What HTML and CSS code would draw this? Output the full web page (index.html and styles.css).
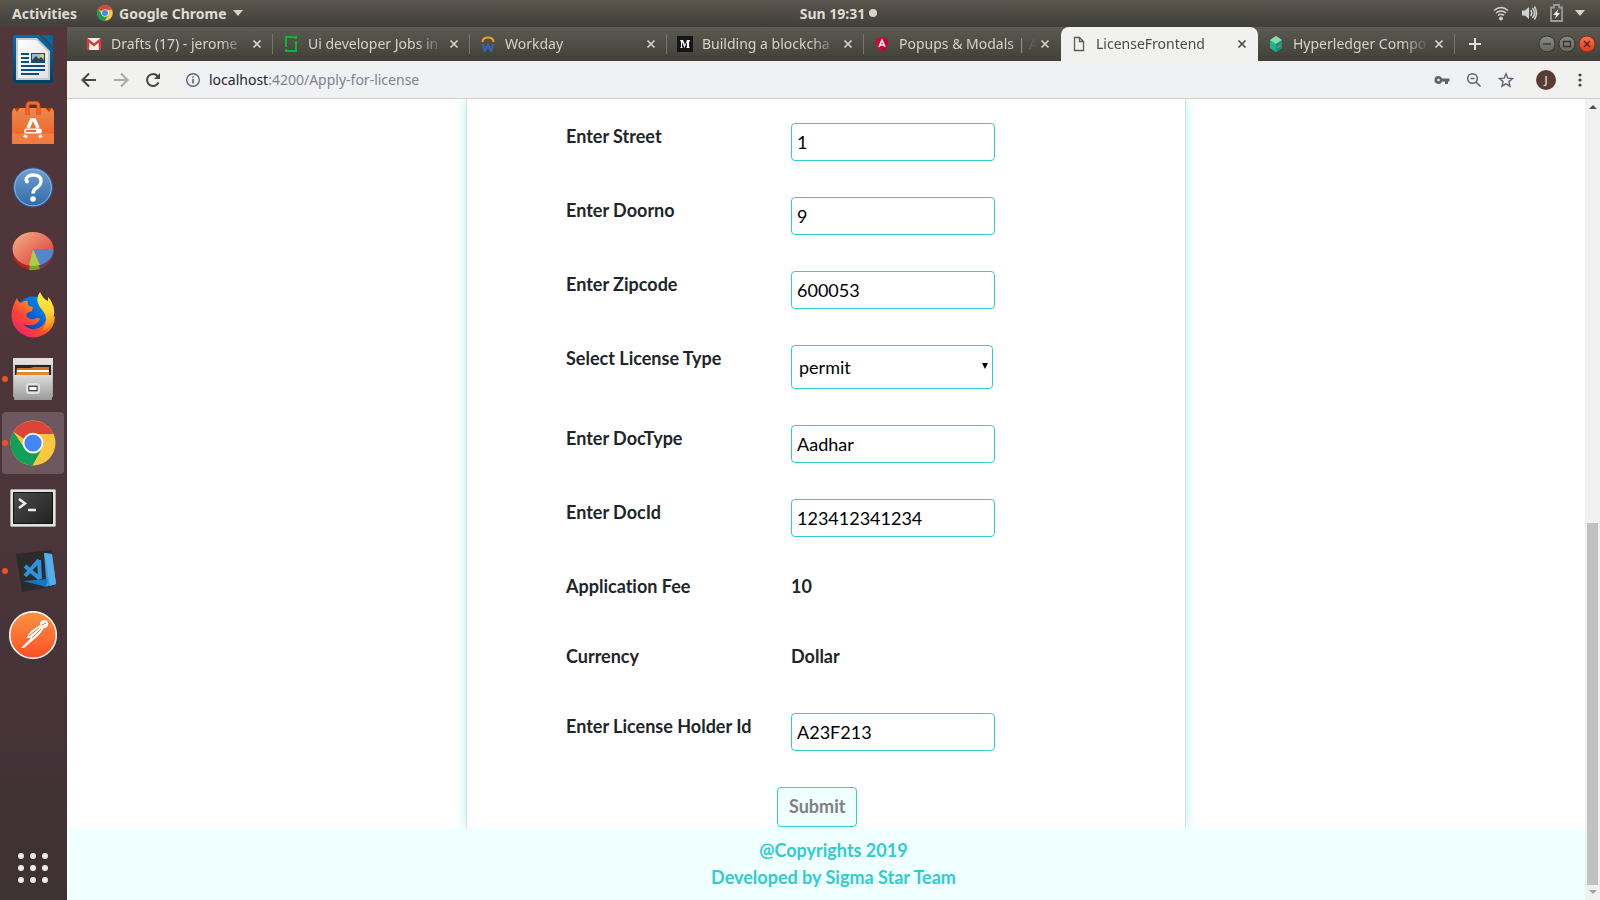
FILE: index.html
```html
<!DOCTYPE html>
<html lang="en">
<head>
<meta charset="utf-8">
<title>LicenseFrontend</title>
<link rel="stylesheet" href="styles.css">
</head>
<body>
<svg class="defs" aria-hidden="true">
  <defs>
    <symbol id="chrome" viewBox="0 0 46 46">
      <circle cx="23" cy="23" r="22.5" fill="#fcc73f"/>
      <path d="M3.5 11.8A22.5 22.5 0 0 1 43.5 14H23a10 10 0 0 0-9 5z" fill="#dc4437"/>
      <path d="M3.5 11.8A22.5 22.5 0 0 0 22.5 45.5L32.500 27.500A10 10 0 0 1 14.300 28z" fill="#10a05a"/>
      <circle cx="23" cy="23" r="10.300" fill="#fff"/>
      <circle cx="23" cy="23" r="8.600" fill="#4285f4"/>
    </symbol>
    <symbol id="close" viewBox="0 0 10 10">
      <path d="M1.500 1.500l7 7M8.500 1.500l-7 7" stroke="currentColor" stroke-width="1.700" fill="none"/>
    </symbol>
    <linearGradient id="blue" x2="0" y2="1"><stop stop-color="#6f9fd4"/><stop offset="1" stop-color="#2f6aa5"/></linearGradient>
    <linearGradient id="bag" x2="0" y2="1"><stop stop-color="#e98a4c"/><stop offset=".7" stop-color="#f0692b"/><stop offset=".72" stop-color="#f37f45"/><stop offset="1" stop-color="#f17a40"/></linearGradient>
    <linearGradient id="pie" x2="1" y2="1"><stop stop-color="#f6b18d"/><stop offset="1" stop-color="#d9342d"/></linearGradient>
    <linearGradient id="fox" x1="0" y1="1" x2="1" y2="0"><stop stop-color="#f0137c"/><stop offset=".4" stop-color="#ff4537"/><stop offset=".7" stop-color="#ff9a12"/><stop offset="1" stop-color="#ffe83c"/></linearGradient>
    <linearGradient id="foxtail" x2="0" y2="1"><stop stop-color="#fff24a"/><stop offset=".5" stop-color="#ffd52c"/><stop offset="1" stop-color="#ff7a10"/></linearGradient>
    <linearGradient id="globe" x1="1" x2="0" y2="1"><stop stop-color="#00a5f4"/><stop offset=".5" stop-color="#0662d6"/><stop offset="1" stop-color="#2b2173"/></linearGradient>
    <linearGradient id="steel" x2="0" y2="1"><stop stop-color="#dcdcdc"/><stop offset="1" stop-color="#9a9a9a"/></linearGradient>
    <linearGradient id="screen" x2="1" y2="1"><stop stop-color="#4b4b4b"/><stop offset="1" stop-color="#222"/></linearGradient>
    <linearGradient id="post" x2="0" y2="1"><stop stop-color="#ff9340"/><stop offset="1" stop-color="#ff4f25"/></linearGradient>
    <linearGradient id="paper" x2="1" y2="1"><stop stop-color="#fff"/><stop offset="1" stop-color="#e2e2e2"/></linearGradient>
    <linearGradient id="writer" x2="0" y2="1"><stop stop-color="#0070b0"/><stop offset="1" stop-color="#003f68"/></linearGradient>
    <linearGradient id="grey" x2="0" y2="1"><stop stop-color="#8b8b84"/><stop offset="1" stop-color="#666660"/></linearGradient>
    <linearGradient id="red" x2="0" y2="1"><stop stop-color="#f5744f"/><stop offset="1" stop-color="#df3f14"/></linearGradient>
  </defs>
</svg>
<div class="desktop">
  <header class="topbar">
    <div class="topbar-left">
      <button class="bar-button">Activities</button>
      <button class="bar-button app-menu"><svg width="16" height="16"><use href="#chrome"/></svg>Google Chrome<svg width="10" height="6"><path d="M0 0h10L5 6z" fill="#d6d4cf"/></svg></button>
    </div>
    <button class="bar-button clock">Sun 19:31<span class="dot"></span></button>
    <div class="status">
      <svg width="16" height="16" viewBox="0 0 16 16" fill="none" stroke="#d6d4cf" stroke-width="1.500"><path d="M1 5.500q7-6 14 0M3 8q5-4 10 0M5 10.500q3-2.300 6 0"/><circle cx="8" cy="13.500" r="1.500" fill="#d6d4cf" stroke-width="1"/></svg>
      <svg width="17" height="16" viewBox="0 0 17 16" fill="none" stroke="#d6d4cf" stroke-width="1.500"><path d="M1 5.500h3L8 2v12l-4-3.500H1z" fill="#d6d4cf" stroke="none"/><path d="M9.500 5q2.500 3 0 6M11.500 3q4 5 0 10M13.500 1.500q4 6.500 0 13"/></svg>
      <svg width="13" height="18" viewBox="0 0 13 18"><path d="M1 3.500h3V1h5v2.500h3V17H1z" fill="none" stroke="#9b9993" stroke-width="1.800"/><path d="M8.500 5L3 11h3l-1 4 5-6H7z" fill="#eee"/></svg>
      <svg width="10" height="6"><path d="M0 0h10L5 6z" fill="#d6d4cf"/></svg>
    </div>
  </header>
  <div class="workspace">
    <nav class="dock" aria-label="Applications">
      <button class="app" aria-label="Writer"><svg width="40" height="48" viewBox="0 0 40 48"><path d="M3 0h23l14 14v31q0 3-3 3H3q-3 0-3-3V3q0-3 3-3z" fill="url(#writer)"/><path d="M28 0h10q2 0 2 2v10z" fill="#0369a3"/><path d="M3 3h21l13 13v29H3z" fill="#c9ccce"/><path d="M5 5h18l12 12v26H5z" fill="url(#paper)"/><path d="M8 19h8M8 23h8M8 27h8M8 31h24M8 35h24M8 39h18" stroke="#0b4f80" stroke-width="2"/><path d="M18 18h14v10H18z" fill="#0b4f80"/><path d="M19 19h12v8H19z" fill="#87bfe4"/><circle cx="29" cy="21" r="2" fill="#e8cc50"/><path d="M19 27v-2l4-4 3 3 2-2 3 3v2z" fill="#33454a"/></svg></button>
      <button class="app" aria-label="Software"><svg width="42" height="44" viewBox="0 0 42 44"><path d="M1 7h40l1 5H0z" fill="#bb4011"/><path d="M0 11L2 7l3 4 3-4h25l4 4 3-4 2 4v32H0z" fill="url(#bag)"/><path d="M15.500 14V5q0-3 3-3h5q3 0 3 3v9" fill="none" stroke="#c9450f" stroke-width="4"/><path d="M15.500 14V5q0-3 3-3h5q3 0 3 3v9" fill="none" stroke="#ef6a37" stroke-width="2.400"/><path d="M16 27l3.500-8h3l3.500 8M14 34l-1 2.500M28 34l1 2.500" fill="none" stroke="#fff" stroke-width="3.600"/><rect x="12" y="27.500" width="18" height="5" rx="2.500" fill="#fff"/><path d="M14 30h10" stroke="#f0692b" stroke-width="2"/></svg></button>
      <button class="app" aria-label="Help"><svg width="42" height="42" viewBox="0 0 42 42"><circle cx="21" cy="21.500" r="19.500" fill="url(#blue)" stroke="#2a5e96"/><circle cx="21" cy="21.500" r="18.300" fill="none" stroke="#8db3dd"/><path d="M14 15q0-6 7-6 8 0 8 6 0 4-4 6.500-4 2.500-4 6" fill="none" stroke="#fff" stroke-width="3.300"/><circle cx="15" cy="15.500" r="2" fill="#fff"/><circle cx="21" cy="33" r="2.800" fill="#fff"/></svg></button>
      <button class="app" aria-label="Disk usage"><svg width="42" height="40" viewBox="0 0 42 40"><ellipse cx="21" cy="22" rx="20" ry="17" fill="#b52424"/><path d="M17 39l4-21 7 20q-5 1.500-11 1z" fill="#7ba42b"/><path d="M28 38l13-12v-7l-13 14z" fill="#245b95"/><ellipse cx="21" cy="18" rx="20.500" ry="17" fill="url(#pie)"/><path d="M21 18h20.500q0 11-13 16z" fill="#5288c9"/><path d="M21 18l7 16q-6 1.500-11 .5z" fill="#a6cf48"/></svg></button>
      <button class="app" aria-label="Firefox"><svg width="44" height="46" viewBox="0 0 44 46"><circle cx="22" cy="23" r="18.500" fill="url(#globe)"/><path d="M6 6q1 4 4 5 4-3 7-2-1 3 1 5l4 1-1 4q-5 1-6 4 2 5 8 4 4-2 6 0-2 5-8 6-5 1-9-1 5 6 12 5 8-1 11-9l9-4q0 12-10 18-12 7-23 0Q0 35 .5 23 1 14 6 6z" fill="url(#fox)"/><path d="M29 0q-4 5-2 11 1 4 5 8 5 6 2 15-2 4-5 6 10-3 13-13 3-9-1-16-1-3-4-6l0 4q-5-2-8-9z" fill="url(#foxtail)"/></svg></button>
      <button class="app running" aria-label="Files"><svg width="42" height="44" viewBox="0 0 42 44"><path d="M1 1h40v39H1z" fill="url(#steel)"/><path d="M2 1h38l1 6H1z" fill="#e0e0e0"/><path d="M3 8h36v10H3z" fill="#252525"/><path d="M5 11h14l2-1h16v8H4z" fill="#d9711f"/><path d="M5 13h32v2H5z" fill="#fff"/><path d="M5 15h32v3H5z" fill="#e38633"/><path d="M2 18h38v24q0 1-1 1H3q-1 0-1-1z" fill="url(#steel)"/><rect x="15" y="27" width="12" height="9" rx="2" fill="#aaa" stroke="#e0e0e0" stroke-width="2"/><rect x="17" y="29.500" width="8" height="4" fill="#fff" stroke="#444"/></svg></button>
      <button class="app running active" aria-label="Google Chrome"><svg width="46" height="46"><use href="#chrome"/></svg></button>
      <button class="app" aria-label="Terminal"><svg width="46" height="42" viewBox="0 0 46 42"><rect x=".5" y="3.500" width="45" height="37" rx="1" fill="#e2e2e2" stroke="#aaa"/><path d="M3.500 6.500h39v31h-39z" fill="url(#screen)" stroke="#111"/><path d="M9 13l6 4.500L9 22M18 24h8" fill="none" stroke="#eee" stroke-width="2.500"/></svg></button>
      <button class="app running code" aria-label="Visual Studio Code"><svg width="42" height="44" viewBox="0 0 42 44"><path d="M1 5l36-4 2 36L7 43z" fill="#2b2b2c"/><path d="M29 4l8 1 4 30-11 3 1-8z" fill="#289ce0"/><path d="M29 4l8 1 4 30-6 2z" fill="#55aee8"/><path d="M8 32l25-2-2 8z" fill="#1477c4"/><path d="M10 17l15 13M24 11L10 27M24 11l1 19" fill="none" stroke="#2d94dc" stroke-width="4"/></svg></button>
      <button class="app" aria-label="Postman"><svg width="48" height="48" viewBox="0 0 48 48"><circle cx="24" cy="24" r="23.300" fill="url(#post)" stroke="#fff" stroke-width="1.500"/><circle cx="35" cy="13" r="4" fill="#fff"/><path d="M31 14l-9 6-5 7h5l-10 10 3 0 15-13 5-7z" fill="#fff"/><path d="M20 25l10-8M23 27l9-9M33 14l4-2" stroke="#ff7035" stroke-width="1"/></svg></button>
      <button class="app launcher" aria-label="Show applications"><svg width="30" height="30" viewBox="0 0 30 30" fill="#eee"><circle cx="3" cy="3" r="3"/><circle cx="15" cy="3" r="3"/><circle cx="27" cy="3" r="3"/><circle cx="3" cy="15" r="3"/><circle cx="15" cy="15" r="3"/><circle cx="27" cy="15" r="3"/><circle cx="3" cy="27" r="3"/><circle cx="15" cy="27" r="3"/><circle cx="27" cy="27" r="3"/></svg></button>
    </nav>
    <section class="browser">
      <div class="tabs">
        <div class="tab"><svg class="favicon" viewBox="0 0 16 16"><path d="M1 2h14v12H1z" fill="#eee"/><path d="M2 14V4l6 5 6-5v10" fill="none" stroke="#d93a32" stroke-width="2.400"/></svg><a class="tab-title" href="#">Drafts (17) - jerome</a><button class="tab-close" aria-label="Close tab"><svg width="10" height="10"><use href="#close"/></svg></button></div>
        <div class="tab"><svg class="favicon" viewBox="0 0 16 16"><path d="M3 11V1h10v2M13 5v10H3v-2" fill="none" stroke="#0bb534" stroke-width="2"/></svg><a class="tab-title" href="#">Ui developer Jobs in</a><button class="tab-close" aria-label="Close tab"><svg width="10" height="10"><use href="#close"/></svg></button></div>
        <div class="tab"><svg class="favicon" viewBox="0 0 16 16"><path d="M2.500 6q0-4.500 5.500-4.500T13.500 6" fill="none" stroke="#eaa31f" stroke-width="2"/><path d="M2.500 8l2.500 7 3-6 3 6 2.500-7" fill="none" stroke="#3865b5" stroke-width="2"/></svg><a class="tab-title" href="#">Workday</a><button class="tab-close" aria-label="Close tab"><svg width="10" height="10"><use href="#close"/></svg></button></div>
        <div class="tab"><svg class="favicon" viewBox="0 0 16 16"><path d="M0 0h16v16H0z" fill="#151515"/><path d="M3 4h3l2 5 2-5h3v1l-1 1v5l1 1H9l1-1V6l-2.500 6L5 6v5l1 1H3l1-1V6z" fill="#fff"/></svg><a class="tab-title" href="#">Building a blockcha</a><button class="tab-close" aria-label="Close tab"><svg width="10" height="10"><use href="#close"/></svg></button></div>
        <div class="tab"><svg class="favicon" viewBox="0 0 16 16"><path d="M8 1l6 2-1 9-5 3-5-3-1-9z" fill="#dd0031"/><path d="M8 1l6 2-1 9-5 3z" fill="#c3002f"/><path d="M5 11l3-7 3 7M6.500 9h3" fill="none" stroke="#fff" stroke-width="1.500"/></svg><a class="tab-title" href="#">Popups &amp; Modals | A</a><button class="tab-close" aria-label="Close tab"><svg width="10" height="10"><use href="#close"/></svg></button></div>
        <div class="tab current"><svg class="favicon" viewBox="0 0 16 16"><path d="M3.500 1.500h5l4 4v9h-9zM8.500 1.500v4h4" fill="none" stroke="#5b5b5b" stroke-width="1.300"/></svg><a class="tab-title" href="#">LicenseFrontend</a><button class="tab-close" aria-label="Close tab"><svg width="10" height="10"><use href="#close"/></svg></button></div>
        <div class="tab"><svg class="favicon" viewBox="0 0 16 16"><path d="M8 0l6 4v8l-6 4-6-4V4z" fill="#20b38a"/><path d="M8 0l6 4-6 4-6-4z" fill="#8edaa7"/><path d="M8 8l6-4v8l-6 4z" fill="#0b9585"/><path d="M9 12l4-3" stroke="#e8644f" stroke-width="1.500"/></svg><a class="tab-title" href="#">Hyperledger Compo</a><button class="tab-close" aria-label="Close tab"><svg width="10" height="10"><use href="#close"/></svg></button></div>
        <button class="new-tab" aria-label="New tab"><svg width="12" height="12"><path d="M6 0v12M0 6h12" stroke="#e4e3dc" stroke-width="2"/></svg></button>
        <div class="window-controls">
          <button aria-label="Minimise"><svg width="18" height="18" viewBox="0 0 18 18"><circle cx="9" cy="9" r="8" fill="url(#grey)" stroke="#34342f"/><path d="M5 9h8" stroke="#34342f" stroke-width="1.300"/></svg></button>
          <button aria-label="Maximise"><svg width="18" height="18" viewBox="0 0 18 18"><circle cx="9" cy="9" r="8" fill="url(#grey)" stroke="#34342f"/><path d="M5.500 6.500h7v5h-7z" fill="none" stroke="#34342f" stroke-width="1.300"/></svg></button>
          <button aria-label="Close"><svg width="18" height="18" viewBox="0 0 18 18"><circle cx="9" cy="9" r="8" fill="url(#red)" stroke="#8b2c12"/><path d="M6 6l6 6M12 6l-6 6" stroke="#4c1b0d" stroke-width="1.300"/></svg></button>
        </div>
      </div>
      <div class="toolbar">
        <button aria-label="Back"><svg width="16" height="16" viewBox="0 0 16 16" fill="none" stroke="#454545" stroke-width="2"><path d="M15 8H2M8 1.500L1.500 8 8 14.500"/></svg></button>
        <button aria-label="Forward"><svg width="16" height="16" viewBox="0 0 16 16" fill="none" stroke="#a5a5a5" stroke-width="2"><path d="M1 8h13M8 1.500L14.500 8 8 14.500"/></svg></button>
        <button aria-label="Reload"><svg width="16" height="16" viewBox="0 0 16 16" fill="none" stroke="#454545" stroke-width="2"><path d="M13.500 10.500A6 6 0 1 1 12.500 4l1.500 2"/><path d="M15 1v6H9z" fill="#454545" stroke="none"/></svg></button>
        <div class="omnibox">
          <svg width="16" height="16" viewBox="0 0 16 16" fill="none" stroke="#5f6368"><circle cx="8" cy="8" r="6.300" stroke-width="1.400"/><path d="M8 7v4.500M8 4.300v1.500" stroke-width="1.600"/></svg>
          <a class="address" href="#"><span class="host">localhost</span>:4200/Apply-for-license</a>
          <div class="omnibox-actions">
            <button aria-label="Saved passwords"><svg width="16" height="16" viewBox="0 0 16 16"><path d="M4.500 4a4 4 0 1 0 3.700 5.500H11V12h3V9.500h1.500v-3H8.200A4 4 0 0 0 4.500 4zm0 2.700a1.300 1.300 0 1 1 0 2.600 1.300 1.300 0 0 1 0-2.600z" fill="#5f6368" fill-rule="evenodd"/></svg></button>
            <button aria-label="Zoom"><svg width="16" height="16" viewBox="0 0 16 16" fill="none" stroke="#5f6368" stroke-width="1.500"><circle cx="6.500" cy="6.500" r="4.800"/><path d="M10 10l4.500 4.500M4.500 6.500h4"/></svg></button>
            <button aria-label="Bookmark"><svg width="16" height="16" viewBox="0 0 16 16" fill="none" stroke="#5f6368" stroke-width="1.400"><path d="M8 1.800l1.800 4.400 4.700.4-3.600 3 1.100 4.600L8 11.800l-4 2.400 1.100-4.600-3.600-3 4.700-.4z"/></svg></button>
          </div>
        </div>
        <button class="avatar" aria-label="Profile">J</button>
        <button aria-label="Menu"><svg width="16" height="16" fill="#454545"><circle cx="8" cy="3" r="1.600"/><circle cx="8" cy="8" r="1.600"/><circle cx="8" cy="13" r="1.600"/></svg></button>
      </div>
      <div class="viewport">
        <div class="page">
          <main>
            <form class="card">
              <div class="row"><label for="street">Enter Street</label><input class="control" id="street" value="1"></div>
              <div class="row"><label for="door">Enter Doorno</label><input class="control" id="door" value="9"></div>
              <div class="row"><label for="zip">Enter Zipcode</label><input class="control" id="zip" value="600053"></div>
              <div class="row"><label for="type">Select License Type</label><div class="select-wrap"><select class="control" id="type"><option>permit</option></select><svg class="caret" width="6" height="6"><path d="M0 0h6L3 6z"/></svg></div></div>
              <div class="row"><label for="doctype">Enter DocType</label><input class="control" id="doctype" value="Aadhar"></div>
              <div class="row"><label for="docid">Enter DocId</label><input class="control" id="docid" value="123412341234"></div>
              <div class="row"><span>Application Fee</span><span>10</span></div>
              <div class="row"><span>Currency</span><span>Dollar</span></div>
              <div class="row"><label for="holder">Enter License Holder Id</label><input class="control" id="holder" value="A23F213"></div>
              <button class="submit" type="submit" disabled>Submit</button>
            </form>
          </main>
          <footer class="footer"><div>@Copyrights 2019</div><div>Developed by Sigma Star Team</div></footer>
        </div>
        <div class="scrollbar" aria-hidden="true">
          <svg width="15" height="15"><path d="M4 10h8L8 6z" fill="#505050"/></svg>
          <div class="track"><div class="thumb"></div></div>
          <svg width="15" height="15"><path d="M4 5h8L8 9z" fill="#a3a3a3"/></svg>
        </div>
      </div>
    </section>
  </div>
</div>
</body>
</html>
```
FILE: styles.css
```css
* { box-sizing: border-box; }

body {
  margin: 0;
  background: #fff;
  font-family: "Noto Sans", "Open Sans", sans-serif;
  font-size: 14px;
}

button {
  padding: 0;
  border: 0;
  background: none;
  color: inherit;
  font: inherit;
}

a { color: inherit; text-decoration: none; }
svg { display: block; flex: none; }
.defs { position: absolute; width: 0; height: 0; }

.desktop {
  display: flex;
  flex-direction: column;
  height: 100vh;
  overflow: hidden;
}

/* System bar */
.topbar {
  display: grid;
  grid-template-columns: 1fr auto 1fr;
  align-items: center;
  flex: none;
  height: 27px;
  padding: 0 15px 1px 12px;
  background: linear-gradient(#5a564e, #403f3a);
  color: #dfdbd2;
  font-weight: 700;
  font-size: 14px;
}

.topbar-left, .status, .bar-button { display: flex; align-items: center; }
.topbar-left { gap: 20px; }
.app-menu { gap: 6px; }
.clock { gap: 4px; padding-left: 80px; }
.dot { width: 8px; height: 8px; border-radius: 50%; background: #d6d4cf; }
.status { justify-content: flex-end; gap: 12px; }

.workspace { display: flex; flex: 1; min-height: 0; }

/* Dock */
.dock {
  display: flex;
  flex-direction: column;
  align-items: center;
  gap: 2px;
  flex: none;
  width: 67px;
  padding: 1px 3px 1px 2px;
  background: linear-gradient(#523639, #4b353a 50%, #453338 80%, #3d3234);
}

.app {
  position: relative;
  display: flex;
  align-items: center;
  justify-content: center;
  width: 62px;
  height: 62px;
  border-radius: 4px;
}

.code { padding-left: 6px; }
.active { background: #6c585e; }
.launcher { margin-top: auto; }

.running::before {
  content: "";
  position: absolute;
  left: 0;
  top: 28px;
  width: 6px;
  height: 6px;
  border-radius: 50%;
  background: #e95420;
}

/* Browser window */
.browser { display: flex; flex-direction: column; flex: 1; min-width: 0; }

.tabs {
  display: flex;
  align-items: center;
  flex: none;
  height: 34px;
  padding: 0 4px 0 9px;
  background: linear-gradient(#5c5b52, #403f39);
  color: #d5d4c8;
}

.tab {
  display: flex;
  align-items: center;
  flex: 0 1 197px;
  min-width: 0;
  height: 34px;
  padding: 0 11px 0 10px;
  background: linear-gradient(#77766c, #77766c) right center / 1px 20px no-repeat;
}

.tab:has(+ .current) { background: none; }

.current {
  border-radius: 8px 8px 0 0;
  background: #f1f1ef;
  color: #4a4a48;
}

.favicon { width: 16px; height: 16px; margin-right: 9px; }

.tab-title {
  flex: 1;
  min-width: 0;
  padding-bottom: 2px;
  overflow: hidden;
  white-space: nowrap;
  mask-image: linear-gradient(to right, #000 calc(100% - 28px), transparent);
}

.tab-close { flex: none; margin-left: 4px; }
.new-tab { margin-left: 14px; }
.window-controls { display: flex; gap: 2px; margin-left: auto; }

.toolbar {
  display: flex;
  align-items: center;
  gap: 16px;
  flex: none;
  height: 38px;
  padding: 0 12px 0 14px;
  border-bottom: 1px solid #cdcdcb;
  background: #f1f1ef;
}

.omnibox {
  display: flex;
  align-items: center;
  flex: 1;
  gap: 8px;
  height: 28px;
  padding: 0 6px 0 8px;
  border-radius: 14px;
  background: #f0f1f4;
  color: #80838a;
}

.host { color: #26272b; }
.omnibox-actions { display: flex; gap: 16px; margin-left: auto; }

.avatar {
  width: 20px;
  height: 20px;
  border-radius: 50%;
  background: #5a3c34;
  color: #fff;
  font-size: 11px;
}

/* Application page */
.viewport { display: flex; flex: 1; min-height: 0; }

.page {
  display: flex;
  flex-direction: column;
  flex: 1;
  min-width: 0;
  color: #212529;
  font: 700 18px/27px Lato, sans-serif;
  font-variant-ligatures: none;
}

main { flex: 1; min-height: 0; overflow: hidden; }

.card {
  display: flex;
  flex-direction: column;
  align-items: flex-start;
  gap: 36px;
  max-width: 720px;
  min-height: 100%;
  margin: 0 auto;
  padding: 24px 99px 1px;
  border: solid #d9e3e3;
  border-width: 0 1px;
  box-shadow: 0 0 10px #afeeee;
}

.row {
  display: grid;
  grid-template-columns: 225px 204px;
  align-items: start;
  min-height: 34px;
}

.control {
  width: 100%;
  height: 38px;
  padding: 0 5px 1px;
  border: 1px solid #30cccf;
  border-radius: 4px;
  background: #fff;
  color: #000;
  font: 400 18px/27px Lato, sans-serif;
}

.select-wrap { position: relative; margin-right: 2px; }
select.control { display: block; height: 44px; padding: 0 7px; appearance: none; }
.caret { position: absolute; right: 5px; top: 18px; pointer-events: none; }

.submit {
  height: 40px;
  margin-left: 211px;
  padding: 0 11px 1px;
  border: 1px solid #30cccf;
  border-radius: 4px;
  background: #f0ffff;
  color: #808080;
}

.footer {
  flex: none;
  padding: 9px 0 9px 15px;
  background: #f0ffff;
  color: #30cccf;
  text-align: center;
}

.scrollbar {
  display: flex;
  flex-direction: column;
  flex: none;
  width: 15px;
  background: #f1f1f1;
}

.track { display: flex; flex-direction: column; justify-content: flex-end; flex: 1; padding: 0 2px; }
.thumb { height: 47%; background: #c1c1c1; }
```
